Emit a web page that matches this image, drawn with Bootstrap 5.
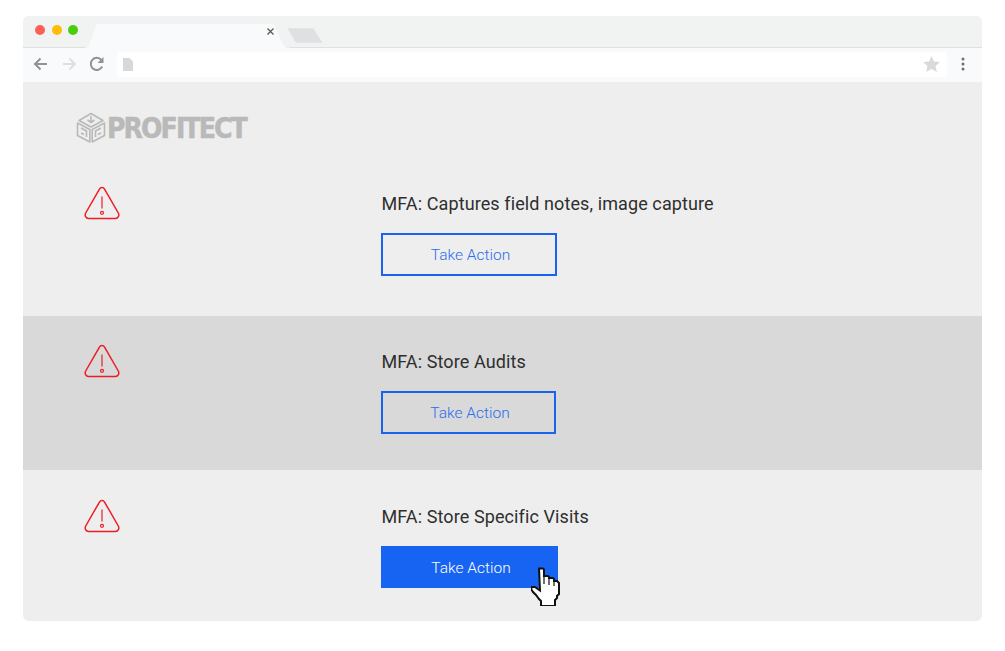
<!DOCTYPE html>
<html lang="en"><head><meta charset="utf-8"><title>Profitect</title>
<link href="https://cdn.jsdelivr.net/npm/bootstrap@5.3.0/dist/css/bootstrap.min.css" rel="stylesheet">
<style>
html,body{background:#fff;margin:0;overflow:hidden}
.shell{width:959px;height:605px;margin:16px 0 0 23px;border-radius:6px;overflow:hidden;background:#eee;font-family:Roboto,sans-serif}
.tabbar{height:32px;background:#f1f3f3;border-bottom:1px solid #dfe1e1;padding-left:12px}
.dots{gap:6.500px;padding-top:1px}
.dot{width:10px;height:10px;border-radius:50%}
.dot-r{background:#fd5f57}.dot-y{background:#febc07}.dot-g{background:#48cf0b}
.tabsvg{margin-left:7px;display:block;flex:none}
.toolbar{height:34px;background:#f9fafc;padding:0 17px 2px 9px}
.nav-ico{width:18px;height:18px;display:block;flex:none}
.nav-gap{margin-left:10px}
.omni{width:830px;height:25px;background:#fff;margin-left:11px;padding:0 7px 0 6px}
.brand-band{height:87px;padding:30px 0 0 53px}
.brand-word{font-family:"DejaVu Sans",sans-serif;font-stretch:condensed;font-weight:700;font-size:28px;line-height:30px;letter-spacing:-1.900px;color:#b9b9b9;margin:2px 0 0 1px;-webkit-text-stroke:.5px #b9b9b9}
.alert-row{padding-left:61px}
.r1{height:147px;padding-top:17px}
.r2{height:154px;padding-top:28px;background:#d9d9d9}
.r3{height:151px;padding-top:29px}
.warn{width:36px;height:34px;flex:none;display:block}
.body-col{margin-left:261px;margin-top:5px;position:relative}
.ttl{font-size:18px;line-height:26px;color:#2e2e2e;letter-spacing:.1px;margin:0 0 16px .5px}
.act{display:block;width:176px;height:43px;padding:0 0 0 3px;border:2px solid #1a63f0;border-radius:0;background:transparent;color:#2a6ded;font-size:15.500px;font-weight:300;line-height:40px}
.act-w2{width:175px;height:43px}
.act-on{width:177px;height:42px;background:#1763f2;border-color:#1763f2;color:#fff}
.pointer{position:absolute;left:150px;top:62px;width:30px;height:40px}
</style></head><body>
<div class="shell d-flex flex-column">
  <div class="tabbar d-flex align-items-center flex-none">
    <div class="d-flex dots align-items-center pb-1"><span class="dot dot-r d-block"></span><span class="dot dot-y d-block"></span><span class="dot dot-g d-block"></span></div>
    <svg class="tabsvg" width="243" height="32" viewBox="0 0 243 32"><path d="M0 31.500H1C3 31.500 4 30 4.500 28.500L11 10C11.500 8.500 12.500 8 14 8H186C188 8 189 8.500 189.500 10L198 28.500C199 30.500 200 31.500 202 31.500H205V33H0Z" fill="#f9fafc"/><path d="M182.500 12.500l6 6m0-6l-6 6" stroke="#555" stroke-width="1.200" fill="none"/><path d="M203 12.500H228l9 14H211Z" fill="#dfe0e1" stroke="#e3e4e5" stroke-linejoin="round"/></svg>
  </div>
  <div class="toolbar d-flex align-items-center">
    <svg class="nav-ico" viewBox="0 0 18 18"><path d="M15 9H3.500M8.500 3.500L3 9l5.500 5.500" fill="none" stroke="#8f9397" stroke-width="2"/></svg>
    <svg class="nav-ico nav-gap" viewBox="0 0 18 18"><path d="M3 9h11.500M9.500 3.500L15 9l-5.500 5.500" fill="none" stroke="#dcdee0" stroke-width="2"/></svg>
    <svg class="nav-ico nav-gap" viewBox="0 0 18 18"><path d="M14.200 11.500A6 6 0 1 1 13.400 5" fill="none" stroke="#8f9397" stroke-width="2"/><path d="M15.500 2v6h-6Z" fill="#8f9397"/></svg>
    <div class="omni d-flex align-items-center justify-content-between">
      <svg width="10" height="13" viewBox="0 0 10 13"><path d="M0 0h6.500L10 3.500V13H0Z" fill="#d6d8d9"/></svg>
      <svg width="17" height="16" viewBox="0 0 17 16"><path d="M8.500 0l2.500 5.400 6 .7-4.400 4 1.200 5.900-5.300-3-5.300 3 1.200-5.900L0 6.100l6-.7Z" fill="#d9dadc"/></svg>
    </div>
    <svg class="ms-auto" width="4" height="14" viewBox="0 0 4 14"><circle cx="2" cy="2" r="1.500" fill="#6d7073"/><circle cx="2" cy="7" r="1.500" fill="#6d7073"/><circle cx="2" cy="12" r="1.500" fill="#6d7073"/></svg>
  </div>
  <div class="brand-band d-flex align-items-start">
    <svg width="30" height="32" viewBox="0 0 30 32"><g fill="none" stroke="#b9b9b9" stroke-width="1.600" stroke-linejoin="round"><path d="M15 1.500L27 8.500 15 15 3 8.500Z"/><path d="M1.500 11L13.800 17.500V30L1.500 23.500Z"/><path d="M28.500 11L16.200 17.500V30L28.500 23.500Z"/><path d="M15 4v5.500M11.500 8l3.500 2.500 3.500-2.500M5 16l5.500 3v6M5 21l3 1.500M25 16l-5.500 3v6M25 21l-3 1.500"/></g></svg>
    <span class="brand-word">PROFITECT</span>
  </div>
  <section class="alert-row r1 d-flex">
    <svg class="warn" viewBox="0 0 36 34"><use href="#tri"/></svg>
    <div class="body-col"><p class="ttl">MFA: Captures field notes, image capture</p><button class="btn act" type="button">Take Action</button></div>
  </section>
  <section class="alert-row r2 d-flex">
    <svg class="warn" viewBox="0 0 36 34"><defs><g id="tri"><path d="M18 1.500C16.800 1.500 15.900 2.200 15.300 3.300L1.700 27C.4 29.500 1.800 32.500 4.600 32.500H31.400C34.200 32.500 35.600 29.500 34.300 27L20.700 3.300C20.100 2.200 19.200 1.500 18 1.500Z" fill="none" stroke="#ee1c25" stroke-width="1.500"/><path d="M18 10.500V22.500" stroke="#ee1c25" stroke-width="1.200"/><circle cx="18" cy="26.800" r="1.500" fill="none" stroke="#ee1c25" stroke-width="1.200"/></g></defs><use href="#tri"/></svg>
    <div class="body-col"><p class="ttl">MFA: Store Audits</p><button class="btn act act-w2" type="button">Take Action</button></div>
  </section>
  <section class="alert-row r3 d-flex">
    <svg class="warn" viewBox="0 0 36 34"><use href="#tri"/></svg>
    <div class="body-col"><p class="ttl">MFA: Store Specific Visits</p><button class="btn act act-on" type="button">Take Action</button>
      <svg class="pointer" viewBox="0 0 30 40"><path d="M8 2.500h4l1 1V10h4l1 1v1h4l1 1v2h3l2 2v11l-2 2v2l-2 2v6H10v-5l-2-2-3-4-3-3-2-3 1-2h3l5 3.500Z" fill="#fff" stroke="#111" stroke-width="2"/><path d="M13 10v8M18 12v7M23 15v5" stroke="#111" stroke-width="1.200"/></svg>
    </div>
  </section>
</div>
</body></html>
